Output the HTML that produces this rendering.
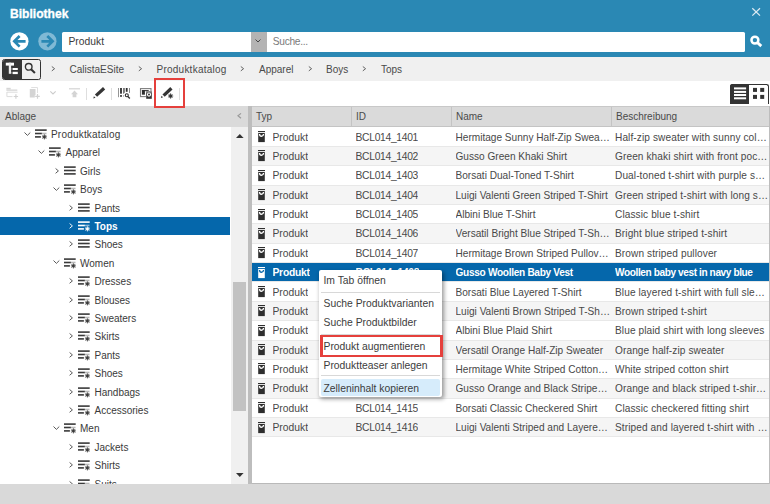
<!DOCTYPE html>
<html><head><meta charset="utf-8"><style>
*{margin:0;padding:0;box-sizing:border-box}
html,body{width:770px;height:504px;overflow:hidden}
body{position:relative;background:#d9d9d9;font-family:"Liberation Sans",sans-serif;font-size:10px;color:#484848}
.a{position:absolute}
.ic{position:absolute;overflow:visible}
.tt{position:absolute;height:18.4px;line-height:19.4px;font-size:10px;white-space:nowrap}
.row{position:absolute;left:252px;width:517px;height:19.37px;line-height:19.6px;border-bottom:1px solid #e8e8e8;white-space:nowrap;font-size:10px}
.row span{position:absolute;top:0;overflow:hidden}
.pi{position:absolute;left:6px;top:3.5px}
.c1{left:20.5px;font-size:10.3px}
.c2{left:103.5px;font-size:10.3px;letter-spacing:-0.3px}
.c3{left:203.5px;width:158px;font-size:10.1px}
.c4{left:363px;width:154px;font-size:10.1px;letter-spacing:0.1px}
.sel .c1{letter-spacing:-0.25px}
.sel .c3{letter-spacing:-0.3px}
.sel .c4{letter-spacing:-0.4px}
.mi{position:absolute;left:323.5px;height:18px;line-height:18px;font-size:10.35px;color:#3c3c3c;white-space:nowrap}
.hd{position:absolute;top:106px;height:21px;background:#dadada;border-bottom:1px solid #c4c4c4;line-height:22px;font-size:10px;color:#4a4a4a}
</style></head><body>
<!-- title bar -->
<div class="a" style="left:0;top:0;width:770px;height:57px;background:#2a88b4"></div>
<div class="a" style="left:10px;top:6px;font-size:12.1px;font-weight:bold;color:#fff;-webkit-text-stroke:0.3px #fff;line-height:16px">Bibliothek</div>
<svg class="ic" style="left:752px;top:8.3px" width="9" height="8" viewBox="0 0 9 8"><path d="M0.3 0.3 L8 7.6 M8 0.3 L0.3 7.6" stroke="#dceaf2" stroke-width="1.25"/></svg>
<!-- nav -->
<svg class="ic" style="left:10px;top:32.2px" width="19" height="19" viewBox="0 0 19 19"><circle cx="9.4" cy="9.3" r="9.1" fill="#fff"/><path d="M4.3 9.3 H15.6 M9.6 4 L4.3 9.3 L9.6 14.6" fill="none" stroke="#2a88b4" stroke-width="2.7"/></svg>
<svg class="ic" style="left:37.5px;top:32.2px" width="19" height="19" viewBox="0 0 19 19"><circle cx="9.4" cy="9.3" r="9.1" fill="#80b9d5"/><path d="M3.4 9.3 H14.6 M9.3 4 L14.6 9.3 L9.3 14.6" fill="none" stroke="#2a88b4" stroke-width="2.7"/></svg>
<div class="a" style="left:61.5px;top:32.2px;width:190px;height:20px;background:#fff;border-radius:1.5px 0 0 1.5px;line-height:20.6px;padding-left:7px;font-size:10.3px;color:#3a3a3a">Produkt</div>
<div class="a" style="left:251.2px;top:32.2px;width:15.6px;height:20px;background:#b4b3b3"></div>
<svg class="ic" style="left:254.9px;top:38.6px" width="7" height="5" viewBox="0 0 7 5"><path d="M0.5 0.5 L3 3 L5.5 0.5" fill="none" stroke="#454545" stroke-width="1"/></svg>
<div class="a" style="left:266.8px;top:32.2px;width:478.7px;height:20px;background:#fff;border-radius:0 1.5px 1.5px 0;line-height:20.8px;padding-left:6px;font-size:10.2px;letter-spacing:-0.3px;color:#7a7a7a">Suche...</div>
<svg class="ic" style="left:749.5px;top:35px" width="13" height="13" viewBox="0 0 13 13"><circle cx="4.9" cy="5.1" r="3.45" fill="none" stroke="#fff" stroke-width="2.5"/><path d="M7.2 7.4 L11.3 11.1" stroke="#fff" stroke-width="2.8"/></svg>
<!-- breadcrumb -->
<div class="a" style="left:0;top:57px;width:770px;height:24px;background:#f0f0f0"></div>
<div class="a" style="left:2px;top:59.2px;width:39px;height:20.8px;border:1px solid #333;border-radius:2.5px;background:#f0f0f0;overflow:hidden"><div class="a" style="left:0;top:0;width:18.8px;height:19px;background:#363636"></div></div>
<svg class="ic" style="left:5px;top:62px" width="14" height="13" viewBox="0 0 14 13"><rect x="0.8" y="0.7" width="8.2" height="2.9" fill="#fff"/><rect x="3.8" y="0.7" width="2.3" height="11.1" fill="#eee"/><rect x="7.6" y="6" width="5.2" height="2" fill="#fff"/><rect x="7.6" y="9.8" width="5.2" height="2.3" fill="#fff"/><rect x="6.1" y="6.6" width="1.5" height="0.8" fill="#aaa"/><rect x="6.1" y="10.5" width="1.5" height="0.8" fill="#aaa"/></svg>
<svg class="ic" style="left:24px;top:62px" width="13" height="13" viewBox="0 0 13 13"><circle cx="4.7" cy="4.8" r="3.3" fill="none" stroke="#333" stroke-width="1.4"/><path d="M7.1 7.2 L10.9 11" stroke="#333" stroke-width="2"/></svg>
<svg class="ic" style="left:51px;top:65.8px" width="5" height="6" viewBox="0 0 5 6"><path d="M0.8 0.5 L3.6 2.7 L0.8 4.9" fill="none" stroke="#555" stroke-width="0.9"/></svg>
<div class="a" style="left:69.5px;top:62.2px;line-height:16px;font-size:10px;color:#4a4a4a;white-space:nowrap">CalistaESite</div>
<svg class="ic" style="left:138px;top:65.8px" width="5" height="6" viewBox="0 0 5 6"><path d="M0.8 0.5 L3.6 2.7 L0.8 4.9" fill="none" stroke="#555" stroke-width="0.9"/></svg>
<div class="a" style="left:156.5px;top:62.2px;line-height:16px;font-size:10px;color:#4a4a4a;white-space:nowrap"><span style="letter-spacing:0.24px">Produktkatalog</span></div>
<svg class="ic" style="left:240px;top:65.8px" width="5" height="6" viewBox="0 0 5 6"><path d="M0.8 0.5 L3.6 2.7 L0.8 4.9" fill="none" stroke="#555" stroke-width="0.9"/></svg>
<div class="a" style="left:259px;top:62.2px;line-height:16px;font-size:10px;color:#4a4a4a;white-space:nowrap">Apparel</div>
<svg class="ic" style="left:308px;top:65.8px" width="5" height="6" viewBox="0 0 5 6"><path d="M0.8 0.5 L3.6 2.7 L0.8 4.9" fill="none" stroke="#555" stroke-width="0.9"/></svg>
<div class="a" style="left:326px;top:62.2px;line-height:16px;font-size:10px;color:#4a4a4a;white-space:nowrap">Boys</div>
<svg class="ic" style="left:362px;top:65.8px" width="5" height="6" viewBox="0 0 5 6"><path d="M0.8 0.5 L3.6 2.7 L0.8 4.9" fill="none" stroke="#555" stroke-width="0.9"/></svg>
<div class="a" style="left:381px;top:62.2px;line-height:16px;font-size:10px;color:#4a4a4a;white-space:nowrap">Tops</div>
<!-- toolbar -->
<div class="a" style="left:0;top:81px;width:770px;height:25px;background:#fff"></div>

<svg class="ic" style="left:6px;top:87px" width="14" height="13" viewBox="0 0 14 13"><rect x="0.4" y="0.8" width="4.3" height="1.7" fill="#d6d6d6"/><rect x="0.4" y="2.5" width="10.9" height="1.3" fill="#d6d6d6"/><path d="M0.9 5.2 H11.6 M0.9 5 V9.6 H6.5" fill="none" stroke="#dcdcdc" stroke-width="1"/><path d="M9.9 7.3 V11.7 M7.7 9.5 H12.1" stroke="#d2d2d2" stroke-width="1.2"/></svg>
<svg class="ic" style="left:29px;top:87px" width="12" height="13" viewBox="0 0 12 13"><path d="M2.2 0.5 H8.5 V6" fill="none" stroke="#e0e0e0" stroke-width="1"/><path d="M0.8 1.9 H6.5 V8 H5.8 V10.6 H0.8 Z" fill="#d4d4d4"/><path d="M8.5 7.1 V11.7 M6.2 9.4 H10.8" stroke="#d2d2d2" stroke-width="1.2"/></svg>
<svg class="ic" style="left:50px;top:91px" width="8" height="5" viewBox="0 0 8 5"><path d="M0.3 0.3 L3 3 L5.7 0.3" fill="none" stroke="#cccccc" stroke-width="1.1"/></svg>
<svg class="ic" style="left:69px;top:87.5px" width="11" height="10" viewBox="0 0 11 10"><rect x="0" y="0.2" width="11" height="1.2" fill="#d4d4d4"/><path d="M5.5 2.4 L9 6.3 H7.4 V9.2 H3.6 V6.3 H2 Z" fill="#d4d4d4"/></svg>
<div class="a" style="left:86px;top:88px;width:1px;height:12px;background:#dedede"></div>
<svg class="ic" style="left:92.5px;top:87px" width="13" height="12" viewBox="0 0 13 12"><path d="M3.0 8.65 L11.1 1.3" stroke="#353535" stroke-width="3.3"/><path d="M0.3 11.4 L0.9 9.2 L2.5 10.8 Z" fill="#353535"/></svg>
<div class="a" style="left:111px;top:88px;width:1px;height:12px;background:#dedede"></div>
<svg class="ic" style="left:118px;top:87.9px" width="13" height="12" viewBox="0 0 13 12"><rect x="0.1" y="0" width="0.9" height="9.2" fill="#8a8a8a"/><rect x="2.1" y="0" width="1.8" height="5.7" fill="#2e2e2e"/><rect x="2.1" y="7.1" width="1.8" height="1.7" fill="#2e2e2e"/><path d="M5 0 H6.9 V4.4 L5.6 5.7 H5 Z" fill="#7a7a7a"/><rect x="5" y="7.1" width="1" height="1.7" fill="#b0b0b0"/><rect x="7.8" y="0" width="1.8" height="3.8" fill="#2e2e2e"/><rect x="11" y="0" width="1" height="4.9" fill="#8a8a8a"/><circle cx="8.8" cy="7.3" r="1.5" fill="none" stroke="#2e2e2e" stroke-width="1.1"/><path d="M9.9 8.5 L11.8 10.4" stroke="#2e2e2e" stroke-width="1.4"/></svg>
<svg class="ic" style="left:139px;top:87px" width="14" height="13" viewBox="0 0 14 13"><rect x="1.5" y="1.6" width="10.5" height="8" fill="none" stroke="#7e7e7e" stroke-width="1.1"/><rect x="2.9" y="3.1" width="3" height="4.6" fill="#2e2e2e"/><rect x="2.9" y="3.1" width="6.8" height="1.1" fill="#2e2e2e"/><rect x="6.9" y="4" width="6.2" height="8.2" fill="#fff"/><rect x="7.2" y="4.3" width="5.6" height="7.5" fill="#333"/><rect x="7.2" y="4.3" width="5.6" height="1.3" fill="#9a9a9a"/><circle cx="10" cy="7.6" r="1.55" fill="#333" stroke="#fff" stroke-width="1.1"/></svg>
<svg class="ic" style="left:161px;top:87px" width="14" height="13" viewBox="0 0 14 13"><path d="M2.6 8.65 L10.4 1.3" stroke="#353535" stroke-width="3.3"/><path d="M-0.1 10.9 L0.5 8.7 L2.1 10.3 Z" fill="#353535"/><g stroke="#353535" stroke-width="0.9"><line x1="9.6" y1="6.4" x2="9.6" y2="11.6"/><line x1="7" y1="9" x2="12.2" y2="9"/><line x1="7.8" y1="7.2" x2="11.4" y2="10.8"/><line x1="11.4" y1="7.2" x2="7.8" y2="10.8"/></g><circle cx="9.6" cy="9" r="1.5" fill="#353535"/></svg>
<div class="a" style="left:179px;top:88px;width:1px;height:12px;background:#dedede"></div>
<div class="a" style="left:730px;top:84px;width:39px;height:20px;border:1.1px solid #333;border-bottom:none;border-radius:2.5px 2.5px 0 0;background:#fff"></div>
<div class="a" style="left:730px;top:84px;width:19px;height:20px;background:#333;border-radius:2.5px 0 0 0"></div>
<svg class="ic" style="left:734px;top:87px" width="13" height="13" viewBox="0 0 13 13"><rect x="0" y="0.4" width="12.1" height="2" fill="#fff"/><rect x="0" y="3.9" width="12.1" height="2" fill="#fff"/><rect x="0" y="7" width="12.1" height="2" fill="#fff"/><rect x="0" y="10.3" width="12.1" height="2" fill="#fff"/></svg>
<svg class="ic" style="left:752px;top:87px" width="13" height="13" viewBox="0 0 13 13"><rect x="1" y="0.9" width="4" height="4" fill="#333"/><rect x="8.2" y="0.9" width="4" height="4" fill="#333"/><rect x="1" y="7.9" width="4" height="4" fill="#333"/><rect x="8.2" y="7.9" width="4" height="4" fill="#333"/></svg>

<!-- left panel -->
<div class="hd" style="left:0;width:248px;padding-left:5px;border-bottom:none">Ablage</div>
<svg class="ic" style="left:237px;top:112.8px" width="5" height="6" viewBox="0 0 5 6"><path d="M4 0.4 L1 2.8 L4 5.2" fill="none" stroke="#999" stroke-width="1.2"/></svg>
<div class="a" style="left:0;top:127px;width:231px;height:357px;background:#fff;overflow:hidden">
</div>
<div class="a" style="left:0;top:127px;width:231px;height:357px;overflow:hidden">
<svg class="ic" style="left:23.8px;top:4.6px" width="7" height="4" viewBox="0 0 7 4"><path d="M0.5 0.5 L3.4 3.4 L6.3 0.5" fill="none" stroke="#505050" stroke-width="0.95"/></svg>
<svg class="ic" style="left:34.6px;top:1.0px" width="13" height="13" viewBox="0 0 13 13"><rect x="0" y="1.3" width="11.7" height="1.6" fill="#3a3a3a"/><rect x="0" y="4.7" width="6.9" height="1.6" fill="#3a3a3a"/><rect x="6.9" y="4.7" width="4.6" height="1.6" fill="#b8b8b8"/><rect x="0" y="8.1" width="5.9" height="1.6" fill="#3a3a3a"/><g stroke="#3a3a3a" stroke-width="0.9"><line x1="9.4" y1="6.4" x2="9.4" y2="11.4"/><line x1="6.9" y1="8.9" x2="11.9" y2="8.9"/><line x1="7.6" y1="7.1" x2="11.2" y2="10.7"/><line x1="11.2" y1="7.1" x2="7.6" y2="10.7"/></g><circle cx="9.4" cy="8.9" r="1.2" fill="#3a3a3a"/></svg>
<div class="tt" style="left:51.0px;top:-2.0px;color:#3a3a3a;font-weight:normal"><span style="letter-spacing:0.2px">Produktkatalog</span></div>
<svg class="ic" style="left:38.3px;top:23.0px" width="7" height="4" viewBox="0 0 7 4"><path d="M0.5 0.5 L3.4 3.4 L6.3 0.5" fill="none" stroke="#505050" stroke-width="0.95"/></svg>
<svg class="ic" style="left:49.1px;top:19.4px" width="13" height="13" viewBox="0 0 13 13"><rect x="0" y="1.3" width="11.7" height="1.6" fill="#3a3a3a"/><rect x="0" y="4.7" width="6.9" height="1.6" fill="#3a3a3a"/><rect x="6.9" y="4.7" width="4.6" height="1.6" fill="#b8b8b8"/><rect x="0" y="8.1" width="5.9" height="1.6" fill="#3a3a3a"/><g stroke="#3a3a3a" stroke-width="0.9"><line x1="9.4" y1="6.4" x2="9.4" y2="11.4"/><line x1="6.9" y1="8.9" x2="11.9" y2="8.9"/><line x1="7.6" y1="7.1" x2="11.2" y2="10.7"/><line x1="11.2" y1="7.1" x2="7.6" y2="10.7"/></g><circle cx="9.4" cy="8.9" r="1.2" fill="#3a3a3a"/></svg>
<div class="tt" style="left:65.5px;top:16.4px;color:#3a3a3a;font-weight:normal">Apparel</div>
<svg class="ic" style="left:54.8px;top:40.699999999999996px" width="5" height="6" viewBox="0 0 5 6"><path d="M0.6 0.5 L3.4 2.9 L0.6 5.3" fill="none" stroke="#505050" stroke-width="0.95"/></svg>
<svg class="ic" style="left:63.6px;top:37.8px" width="13" height="11" viewBox="0 0 13 11"><rect x="0" y="1.3" width="11.7" height="1.6" fill="#3a3a3a"/><rect x="0" y="4.7" width="11.7" height="1.6" fill="#3a3a3a"/><rect x="0" y="8.1" width="11.7" height="1.6" fill="#3a3a3a"/></svg>
<div class="tt" style="left:80.0px;top:34.8px;color:#3a3a3a;font-weight:normal">Girls</div>
<svg class="ic" style="left:52.8px;top:59.8px" width="7" height="4" viewBox="0 0 7 4"><path d="M0.5 0.5 L3.4 3.4 L6.3 0.5" fill="none" stroke="#505050" stroke-width="0.95"/></svg>
<svg class="ic" style="left:63.6px;top:56.199999999999996px" width="13" height="13" viewBox="0 0 13 13"><rect x="0" y="1.3" width="11.7" height="1.6" fill="#3a3a3a"/><rect x="0" y="4.7" width="6.9" height="1.6" fill="#3a3a3a"/><rect x="6.9" y="4.7" width="4.6" height="1.6" fill="#b8b8b8"/><rect x="0" y="8.1" width="5.9" height="1.6" fill="#3a3a3a"/><g stroke="#3a3a3a" stroke-width="0.9"><line x1="9.4" y1="6.4" x2="9.4" y2="11.4"/><line x1="6.9" y1="8.9" x2="11.9" y2="8.9"/><line x1="7.6" y1="7.1" x2="11.2" y2="10.7"/><line x1="11.2" y1="7.1" x2="7.6" y2="10.7"/></g><circle cx="9.4" cy="8.9" r="1.2" fill="#3a3a3a"/></svg>
<div class="tt" style="left:80.0px;top:53.2px;color:#3a3a3a;font-weight:normal">Boys</div>
<svg class="ic" style="left:69.3px;top:77.5px" width="5" height="6" viewBox="0 0 5 6"><path d="M0.6 0.5 L3.4 2.9 L0.6 5.3" fill="none" stroke="#505050" stroke-width="0.95"/></svg>
<svg class="ic" style="left:78.1px;top:74.6px" width="13" height="11" viewBox="0 0 13 11"><rect x="0" y="1.3" width="11.7" height="1.6" fill="#3a3a3a"/><rect x="0" y="4.7" width="11.7" height="1.6" fill="#3a3a3a"/><rect x="0" y="8.1" width="11.7" height="1.6" fill="#3a3a3a"/></svg>
<div class="tt" style="left:94.5px;top:71.6px;color:#3a3a3a;font-weight:normal">Pants</div>
<div style="position:absolute;left:0;top:90.0px;width:230px;height:18.4px;background:#0567ab"></div>
<svg class="ic" style="left:69.3px;top:95.9px" width="5" height="6" viewBox="0 0 5 6"><path d="M0.6 0.5 L3.4 2.9 L0.6 5.3" fill="none" stroke="#ffffff" stroke-width="0.95"/></svg>
<svg class="ic" style="left:78.1px;top:93.0px" width="13" height="13" viewBox="0 0 13 13"><rect x="0" y="1.3" width="11.7" height="1.6" fill="#ffffff"/><rect x="0" y="4.7" width="6.9" height="1.6" fill="#ffffff"/><rect x="6.9" y="4.7" width="4.6" height="1.6" fill="#8fb8d8"/><rect x="0" y="8.1" width="5.9" height="1.6" fill="#ffffff"/><g stroke="#ffffff" stroke-width="0.9"><line x1="9.4" y1="6.4" x2="9.4" y2="11.4"/><line x1="6.9" y1="8.9" x2="11.9" y2="8.9"/><line x1="7.6" y1="7.1" x2="11.2" y2="10.7"/><line x1="11.2" y1="7.1" x2="7.6" y2="10.7"/></g><circle cx="9.4" cy="8.9" r="1.2" fill="#ffffff"/></svg>
<div class="tt" style="left:94.5px;top:90.0px;color:#ffffff;font-weight:bold">Tops</div>
<svg class="ic" style="left:69.3px;top:114.3px" width="5" height="6" viewBox="0 0 5 6"><path d="M0.6 0.5 L3.4 2.9 L0.6 5.3" fill="none" stroke="#505050" stroke-width="0.95"/></svg>
<svg class="ic" style="left:78.1px;top:111.39999999999999px" width="13" height="11" viewBox="0 0 13 11"><rect x="0" y="1.3" width="11.7" height="1.6" fill="#3a3a3a"/><rect x="0" y="4.7" width="11.7" height="1.6" fill="#3a3a3a"/><rect x="0" y="8.1" width="11.7" height="1.6" fill="#3a3a3a"/></svg>
<div class="tt" style="left:94.5px;top:108.4px;color:#3a3a3a;font-weight:normal">Shoes</div>
<svg class="ic" style="left:52.8px;top:133.39999999999998px" width="7" height="4" viewBox="0 0 7 4"><path d="M0.5 0.5 L3.4 3.4 L6.3 0.5" fill="none" stroke="#505050" stroke-width="0.95"/></svg>
<svg class="ic" style="left:63.6px;top:129.79999999999998px" width="13" height="13" viewBox="0 0 13 13"><rect x="0" y="1.3" width="11.7" height="1.6" fill="#3a3a3a"/><rect x="0" y="4.7" width="6.9" height="1.6" fill="#3a3a3a"/><rect x="6.9" y="4.7" width="4.6" height="1.6" fill="#b8b8b8"/><rect x="0" y="8.1" width="5.9" height="1.6" fill="#3a3a3a"/><g stroke="#3a3a3a" stroke-width="0.9"><line x1="9.4" y1="6.4" x2="9.4" y2="11.4"/><line x1="6.9" y1="8.9" x2="11.9" y2="8.9"/><line x1="7.6" y1="7.1" x2="11.2" y2="10.7"/><line x1="11.2" y1="7.1" x2="7.6" y2="10.7"/></g><circle cx="9.4" cy="8.9" r="1.2" fill="#3a3a3a"/></svg>
<div class="tt" style="left:80.0px;top:126.8px;color:#3a3a3a;font-weight:normal">Women</div>
<svg class="ic" style="left:69.3px;top:151.1px" width="5" height="6" viewBox="0 0 5 6"><path d="M0.6 0.5 L3.4 2.9 L0.6 5.3" fill="none" stroke="#505050" stroke-width="0.95"/></svg>
<svg class="ic" style="left:78.1px;top:148.2px" width="13" height="13" viewBox="0 0 13 13"><rect x="0" y="1.3" width="11.7" height="1.6" fill="#3a3a3a"/><rect x="0" y="4.7" width="6.9" height="1.6" fill="#3a3a3a"/><rect x="6.9" y="4.7" width="4.6" height="1.6" fill="#b8b8b8"/><rect x="0" y="8.1" width="5.9" height="1.6" fill="#3a3a3a"/><g stroke="#3a3a3a" stroke-width="0.9"><line x1="9.4" y1="6.4" x2="9.4" y2="11.4"/><line x1="6.9" y1="8.9" x2="11.9" y2="8.9"/><line x1="7.6" y1="7.1" x2="11.2" y2="10.7"/><line x1="11.2" y1="7.1" x2="7.6" y2="10.7"/></g><circle cx="9.4" cy="8.9" r="1.2" fill="#3a3a3a"/></svg>
<div class="tt" style="left:94.5px;top:145.2px;color:#3a3a3a;font-weight:normal">Dresses</div>
<svg class="ic" style="left:69.3px;top:169.5px" width="5" height="6" viewBox="0 0 5 6"><path d="M0.6 0.5 L3.4 2.9 L0.6 5.3" fill="none" stroke="#505050" stroke-width="0.95"/></svg>
<svg class="ic" style="left:78.1px;top:166.6px" width="13" height="13" viewBox="0 0 13 13"><rect x="0" y="1.3" width="11.7" height="1.6" fill="#3a3a3a"/><rect x="0" y="4.7" width="6.9" height="1.6" fill="#3a3a3a"/><rect x="6.9" y="4.7" width="4.6" height="1.6" fill="#b8b8b8"/><rect x="0" y="8.1" width="5.9" height="1.6" fill="#3a3a3a"/><g stroke="#3a3a3a" stroke-width="0.9"><line x1="9.4" y1="6.4" x2="9.4" y2="11.4"/><line x1="6.9" y1="8.9" x2="11.9" y2="8.9"/><line x1="7.6" y1="7.1" x2="11.2" y2="10.7"/><line x1="11.2" y1="7.1" x2="7.6" y2="10.7"/></g><circle cx="9.4" cy="8.9" r="1.2" fill="#3a3a3a"/></svg>
<div class="tt" style="left:94.5px;top:163.6px;color:#3a3a3a;font-weight:normal">Blouses</div>
<svg class="ic" style="left:69.3px;top:187.9px" width="5" height="6" viewBox="0 0 5 6"><path d="M0.6 0.5 L3.4 2.9 L0.6 5.3" fill="none" stroke="#505050" stroke-width="0.95"/></svg>
<svg class="ic" style="left:78.1px;top:185.0px" width="13" height="13" viewBox="0 0 13 13"><rect x="0" y="1.3" width="11.7" height="1.6" fill="#3a3a3a"/><rect x="0" y="4.7" width="6.9" height="1.6" fill="#3a3a3a"/><rect x="6.9" y="4.7" width="4.6" height="1.6" fill="#b8b8b8"/><rect x="0" y="8.1" width="5.9" height="1.6" fill="#3a3a3a"/><g stroke="#3a3a3a" stroke-width="0.9"><line x1="9.4" y1="6.4" x2="9.4" y2="11.4"/><line x1="6.9" y1="8.9" x2="11.9" y2="8.9"/><line x1="7.6" y1="7.1" x2="11.2" y2="10.7"/><line x1="11.2" y1="7.1" x2="7.6" y2="10.7"/></g><circle cx="9.4" cy="8.9" r="1.2" fill="#3a3a3a"/></svg>
<div class="tt" style="left:94.5px;top:182.0px;color:#3a3a3a;font-weight:normal">Sweaters</div>
<svg class="ic" style="left:69.3px;top:206.29999999999998px" width="5" height="6" viewBox="0 0 5 6"><path d="M0.6 0.5 L3.4 2.9 L0.6 5.3" fill="none" stroke="#505050" stroke-width="0.95"/></svg>
<svg class="ic" style="left:78.1px;top:203.39999999999998px" width="13" height="13" viewBox="0 0 13 13"><rect x="0" y="1.3" width="11.7" height="1.6" fill="#3a3a3a"/><rect x="0" y="4.7" width="6.9" height="1.6" fill="#3a3a3a"/><rect x="6.9" y="4.7" width="4.6" height="1.6" fill="#b8b8b8"/><rect x="0" y="8.1" width="5.9" height="1.6" fill="#3a3a3a"/><g stroke="#3a3a3a" stroke-width="0.9"><line x1="9.4" y1="6.4" x2="9.4" y2="11.4"/><line x1="6.9" y1="8.9" x2="11.9" y2="8.9"/><line x1="7.6" y1="7.1" x2="11.2" y2="10.7"/><line x1="11.2" y1="7.1" x2="7.6" y2="10.7"/></g><circle cx="9.4" cy="8.9" r="1.2" fill="#3a3a3a"/></svg>
<div class="tt" style="left:94.5px;top:200.4px;color:#3a3a3a;font-weight:normal">Skirts</div>
<svg class="ic" style="left:69.3px;top:224.7px" width="5" height="6" viewBox="0 0 5 6"><path d="M0.6 0.5 L3.4 2.9 L0.6 5.3" fill="none" stroke="#505050" stroke-width="0.95"/></svg>
<svg class="ic" style="left:78.1px;top:221.79999999999998px" width="13" height="13" viewBox="0 0 13 13"><rect x="0" y="1.3" width="11.7" height="1.6" fill="#3a3a3a"/><rect x="0" y="4.7" width="6.9" height="1.6" fill="#3a3a3a"/><rect x="6.9" y="4.7" width="4.6" height="1.6" fill="#b8b8b8"/><rect x="0" y="8.1" width="5.9" height="1.6" fill="#3a3a3a"/><g stroke="#3a3a3a" stroke-width="0.9"><line x1="9.4" y1="6.4" x2="9.4" y2="11.4"/><line x1="6.9" y1="8.9" x2="11.9" y2="8.9"/><line x1="7.6" y1="7.1" x2="11.2" y2="10.7"/><line x1="11.2" y1="7.1" x2="7.6" y2="10.7"/></g><circle cx="9.4" cy="8.9" r="1.2" fill="#3a3a3a"/></svg>
<div class="tt" style="left:94.5px;top:218.8px;color:#3a3a3a;font-weight:normal">Pants</div>
<svg class="ic" style="left:69.3px;top:243.1px" width="5" height="6" viewBox="0 0 5 6"><path d="M0.6 0.5 L3.4 2.9 L0.6 5.3" fill="none" stroke="#505050" stroke-width="0.95"/></svg>
<svg class="ic" style="left:78.1px;top:240.2px" width="13" height="13" viewBox="0 0 13 13"><rect x="0" y="1.3" width="11.7" height="1.6" fill="#3a3a3a"/><rect x="0" y="4.7" width="6.9" height="1.6" fill="#3a3a3a"/><rect x="6.9" y="4.7" width="4.6" height="1.6" fill="#b8b8b8"/><rect x="0" y="8.1" width="5.9" height="1.6" fill="#3a3a3a"/><g stroke="#3a3a3a" stroke-width="0.9"><line x1="9.4" y1="6.4" x2="9.4" y2="11.4"/><line x1="6.9" y1="8.9" x2="11.9" y2="8.9"/><line x1="7.6" y1="7.1" x2="11.2" y2="10.7"/><line x1="11.2" y1="7.1" x2="7.6" y2="10.7"/></g><circle cx="9.4" cy="8.9" r="1.2" fill="#3a3a3a"/></svg>
<div class="tt" style="left:94.5px;top:237.2px;color:#3a3a3a;font-weight:normal">Shoes</div>
<svg class="ic" style="left:69.3px;top:261.49999999999994px" width="5" height="6" viewBox="0 0 5 6"><path d="M0.6 0.5 L3.4 2.9 L0.6 5.3" fill="none" stroke="#505050" stroke-width="0.95"/></svg>
<svg class="ic" style="left:78.1px;top:258.59999999999997px" width="13" height="13" viewBox="0 0 13 13"><rect x="0" y="1.3" width="11.7" height="1.6" fill="#3a3a3a"/><rect x="0" y="4.7" width="6.9" height="1.6" fill="#3a3a3a"/><rect x="6.9" y="4.7" width="4.6" height="1.6" fill="#b8b8b8"/><rect x="0" y="8.1" width="5.9" height="1.6" fill="#3a3a3a"/><g stroke="#3a3a3a" stroke-width="0.9"><line x1="9.4" y1="6.4" x2="9.4" y2="11.4"/><line x1="6.9" y1="8.9" x2="11.9" y2="8.9"/><line x1="7.6" y1="7.1" x2="11.2" y2="10.7"/><line x1="11.2" y1="7.1" x2="7.6" y2="10.7"/></g><circle cx="9.4" cy="8.9" r="1.2" fill="#3a3a3a"/></svg>
<div class="tt" style="left:94.5px;top:255.6px;color:#3a3a3a;font-weight:normal">Handbags</div>
<svg class="ic" style="left:69.3px;top:279.9px" width="5" height="6" viewBox="0 0 5 6"><path d="M0.6 0.5 L3.4 2.9 L0.6 5.3" fill="none" stroke="#505050" stroke-width="0.95"/></svg>
<svg class="ic" style="left:78.1px;top:277.0px" width="13" height="13" viewBox="0 0 13 13"><rect x="0" y="1.3" width="11.7" height="1.6" fill="#3a3a3a"/><rect x="0" y="4.7" width="6.9" height="1.6" fill="#3a3a3a"/><rect x="6.9" y="4.7" width="4.6" height="1.6" fill="#b8b8b8"/><rect x="0" y="8.1" width="5.9" height="1.6" fill="#3a3a3a"/><g stroke="#3a3a3a" stroke-width="0.9"><line x1="9.4" y1="6.4" x2="9.4" y2="11.4"/><line x1="6.9" y1="8.9" x2="11.9" y2="8.9"/><line x1="7.6" y1="7.1" x2="11.2" y2="10.7"/><line x1="11.2" y1="7.1" x2="7.6" y2="10.7"/></g><circle cx="9.4" cy="8.9" r="1.2" fill="#3a3a3a"/></svg>
<div class="tt" style="left:94.5px;top:274.0px;color:#3a3a3a;font-weight:normal">Accessories</div>
<svg class="ic" style="left:52.8px;top:299.0px" width="7" height="4" viewBox="0 0 7 4"><path d="M0.5 0.5 L3.4 3.4 L6.3 0.5" fill="none" stroke="#505050" stroke-width="0.95"/></svg>
<svg class="ic" style="left:63.6px;top:295.4px" width="13" height="13" viewBox="0 0 13 13"><rect x="0" y="1.3" width="11.7" height="1.6" fill="#3a3a3a"/><rect x="0" y="4.7" width="6.9" height="1.6" fill="#3a3a3a"/><rect x="6.9" y="4.7" width="4.6" height="1.6" fill="#b8b8b8"/><rect x="0" y="8.1" width="5.9" height="1.6" fill="#3a3a3a"/><g stroke="#3a3a3a" stroke-width="0.9"><line x1="9.4" y1="6.4" x2="9.4" y2="11.4"/><line x1="6.9" y1="8.9" x2="11.9" y2="8.9"/><line x1="7.6" y1="7.1" x2="11.2" y2="10.7"/><line x1="11.2" y1="7.1" x2="7.6" y2="10.7"/></g><circle cx="9.4" cy="8.9" r="1.2" fill="#3a3a3a"/></svg>
<div class="tt" style="left:80.0px;top:292.4px;color:#3a3a3a;font-weight:normal">Men</div>
<svg class="ic" style="left:69.3px;top:316.69999999999993px" width="5" height="6" viewBox="0 0 5 6"><path d="M0.6 0.5 L3.4 2.9 L0.6 5.3" fill="none" stroke="#505050" stroke-width="0.95"/></svg>
<svg class="ic" style="left:78.1px;top:313.79999999999995px" width="13" height="13" viewBox="0 0 13 13"><rect x="0" y="1.3" width="11.7" height="1.6" fill="#3a3a3a"/><rect x="0" y="4.7" width="6.9" height="1.6" fill="#3a3a3a"/><rect x="6.9" y="4.7" width="4.6" height="1.6" fill="#b8b8b8"/><rect x="0" y="8.1" width="5.9" height="1.6" fill="#3a3a3a"/><g stroke="#3a3a3a" stroke-width="0.9"><line x1="9.4" y1="6.4" x2="9.4" y2="11.4"/><line x1="6.9" y1="8.9" x2="11.9" y2="8.9"/><line x1="7.6" y1="7.1" x2="11.2" y2="10.7"/><line x1="11.2" y1="7.1" x2="7.6" y2="10.7"/></g><circle cx="9.4" cy="8.9" r="1.2" fill="#3a3a3a"/></svg>
<div class="tt" style="left:94.5px;top:310.8px;color:#3a3a3a;font-weight:normal">Jackets</div>
<svg class="ic" style="left:69.3px;top:335.09999999999997px" width="5" height="6" viewBox="0 0 5 6"><path d="M0.6 0.5 L3.4 2.9 L0.6 5.3" fill="none" stroke="#505050" stroke-width="0.95"/></svg>
<svg class="ic" style="left:78.1px;top:332.2px" width="13" height="13" viewBox="0 0 13 13"><rect x="0" y="1.3" width="11.7" height="1.6" fill="#3a3a3a"/><rect x="0" y="4.7" width="6.9" height="1.6" fill="#3a3a3a"/><rect x="6.9" y="4.7" width="4.6" height="1.6" fill="#b8b8b8"/><rect x="0" y="8.1" width="5.9" height="1.6" fill="#3a3a3a"/><g stroke="#3a3a3a" stroke-width="0.9"><line x1="9.4" y1="6.4" x2="9.4" y2="11.4"/><line x1="6.9" y1="8.9" x2="11.9" y2="8.9"/><line x1="7.6" y1="7.1" x2="11.2" y2="10.7"/><line x1="11.2" y1="7.1" x2="7.6" y2="10.7"/></g><circle cx="9.4" cy="8.9" r="1.2" fill="#3a3a3a"/></svg>
<div class="tt" style="left:94.5px;top:329.2px;color:#3a3a3a;font-weight:normal">Shirts</div>
<svg class="ic" style="left:69.3px;top:353.49999999999994px" width="5" height="6" viewBox="0 0 5 6"><path d="M0.6 0.5 L3.4 2.9 L0.6 5.3" fill="none" stroke="#505050" stroke-width="0.95"/></svg>
<svg class="ic" style="left:78.1px;top:350.59999999999997px" width="13" height="13" viewBox="0 0 13 13"><rect x="0" y="1.3" width="11.7" height="1.6" fill="#3a3a3a"/><rect x="0" y="4.7" width="6.9" height="1.6" fill="#3a3a3a"/><rect x="6.9" y="4.7" width="4.6" height="1.6" fill="#b8b8b8"/><rect x="0" y="8.1" width="5.9" height="1.6" fill="#3a3a3a"/><g stroke="#3a3a3a" stroke-width="0.9"><line x1="9.4" y1="6.4" x2="9.4" y2="11.4"/><line x1="6.9" y1="8.9" x2="11.9" y2="8.9"/><line x1="7.6" y1="7.1" x2="11.2" y2="10.7"/><line x1="11.2" y1="7.1" x2="7.6" y2="10.7"/></g><circle cx="9.4" cy="8.9" r="1.2" fill="#3a3a3a"/></svg>
<div class="tt" style="left:94.5px;top:347.6px;color:#3a3a3a;font-weight:normal">Suits</div>
</div>
<div class="a" style="left:231px;top:127px;width:17px;height:357px;background:#f0f0f0"></div>
<div class="a" style="left:232.7px;top:282px;width:13.3px;height:129px;background:#c2c2c2"></div>
<svg class="ic" style="left:235.7px;top:133.7px" width="8" height="5" viewBox="0 0 8 5"><path d="M0 4 L3.8 0 L7.6 4 Z" fill="#333"/></svg>
<svg class="ic" style="left:235.7px;top:472.8px" width="8" height="5" viewBox="0 0 8 5"><path d="M0 0 L3.8 4 L7.6 0 Z" fill="#333"/></svg>
<div class="a" style="left:248px;top:106px;width:4px;height:378px;background:#bdbdbd"></div>
<!-- grid -->
<div class="a" style="left:252px;top:127px;width:517px;height:357px;background:#fff"></div>
<div class="hd" style="left:252px;width:100px;padding-left:4px;border-right:1px solid #c4c4c4">Typ</div>
<div class="hd" style="left:352px;width:100px;padding-left:4px;border-right:1px solid #c4c4c4">ID</div>
<div class="hd" style="left:452px;width:160px;padding-left:4px;border-right:1px solid #c4c4c4">Name</div>
<div class="hd" style="left:612px;width:157px;padding-left:4px">Beschreibung</div>
<div class="row" style="top:127.5px;background:#ffffff;color:#484848;font-weight:normal"><svg class="pi" width="8" height="12" viewBox="0 0 8 12"><rect x="0" y="0" width="7" height="1.1" fill="#2e2e2e"/><rect x="0.2" y="2" width="6.6" height="9.1" fill="#2e2e2e"/><path d="M1.55 2.9 C1.55 6 5.45 6 5.45 2.9" fill="none" stroke="#ffffff" stroke-width="1.3"/></svg><span class="c1">Produkt</span><span class="c2">BCL014_1401</span><span class="c3">Hermitage Sunny Half-Zip Swea…</span><span class="c4">Half-zip sweater with sunny col…</span></div>
<div class="row" style="top:146.9px;background:#f5f5f5;color:#484848;font-weight:normal"><svg class="pi" width="8" height="12" viewBox="0 0 8 12"><rect x="0" y="0" width="7" height="1.1" fill="#2e2e2e"/><rect x="0.2" y="2" width="6.6" height="9.1" fill="#2e2e2e"/><path d="M1.55 2.9 C1.55 6 5.45 6 5.45 2.9" fill="none" stroke="#ffffff" stroke-width="1.3"/></svg><span class="c1">Produkt</span><span class="c2">BCL014_1402</span><span class="c3">Gusso Green Khaki Shirt</span><span class="c4">Green khaki shirt with front poc…</span></div>
<div class="row" style="top:166.2px;background:#ffffff;color:#484848;font-weight:normal"><svg class="pi" width="8" height="12" viewBox="0 0 8 12"><rect x="0" y="0" width="7" height="1.1" fill="#2e2e2e"/><rect x="0.2" y="2" width="6.6" height="9.1" fill="#2e2e2e"/><path d="M1.55 2.9 C1.55 6 5.45 6 5.45 2.9" fill="none" stroke="#ffffff" stroke-width="1.3"/></svg><span class="c1">Produkt</span><span class="c2">BCL014_1403</span><span class="c3">Borsati Dual-Toned T-Shirt</span><span class="c4">Dual-toned t-shirt with purple s…</span></div>
<div class="row" style="top:185.6px;background:#f5f5f5;color:#484848;font-weight:normal"><svg class="pi" width="8" height="12" viewBox="0 0 8 12"><rect x="0" y="0" width="7" height="1.1" fill="#2e2e2e"/><rect x="0.2" y="2" width="6.6" height="9.1" fill="#2e2e2e"/><path d="M1.55 2.9 C1.55 6 5.45 6 5.45 2.9" fill="none" stroke="#ffffff" stroke-width="1.3"/></svg><span class="c1">Produkt</span><span class="c2">BCL014_1404</span><span class="c3">Luigi Valenti Green Striped T-Shirt</span><span class="c4">Green striped t-shirt with long s…</span></div>
<div class="row" style="top:205.0px;background:#ffffff;color:#484848;font-weight:normal"><svg class="pi" width="8" height="12" viewBox="0 0 8 12"><rect x="0" y="0" width="7" height="1.1" fill="#2e2e2e"/><rect x="0.2" y="2" width="6.6" height="9.1" fill="#2e2e2e"/><path d="M1.55 2.9 C1.55 6 5.45 6 5.45 2.9" fill="none" stroke="#ffffff" stroke-width="1.3"/></svg><span class="c1">Produkt</span><span class="c2">BCL014_1405</span><span class="c3">Albini Blue T-Shirt</span><span class="c4">Classic blue t-shirt</span></div>
<div class="row" style="top:224.4px;background:#f5f5f5;color:#484848;font-weight:normal"><svg class="pi" width="8" height="12" viewBox="0 0 8 12"><rect x="0" y="0" width="7" height="1.1" fill="#2e2e2e"/><rect x="0.2" y="2" width="6.6" height="9.1" fill="#2e2e2e"/><path d="M1.55 2.9 C1.55 6 5.45 6 5.45 2.9" fill="none" stroke="#ffffff" stroke-width="1.3"/></svg><span class="c1">Produkt</span><span class="c2">BCL014_1406</span><span class="c3">Versatil Bright Blue Striped T-Sh…</span><span class="c4">Bright blue striped t-shirt</span></div>
<div class="row" style="top:243.7px;background:#ffffff;color:#484848;font-weight:normal"><svg class="pi" width="8" height="12" viewBox="0 0 8 12"><rect x="0" y="0" width="7" height="1.1" fill="#2e2e2e"/><rect x="0.2" y="2" width="6.6" height="9.1" fill="#2e2e2e"/><path d="M1.55 2.9 C1.55 6 5.45 6 5.45 2.9" fill="none" stroke="#ffffff" stroke-width="1.3"/></svg><span class="c1">Produkt</span><span class="c2">BCL014_1407</span><span class="c3">Hermitage Brown Striped Pullov…</span><span class="c4">Brown striped pullover</span></div>
<div class="row sel" style="top:263.1px;background:#0567ab;color:#ffffff;font-weight:bold"><svg class="pi" width="8" height="12" viewBox="0 0 8 12"><rect x="0" y="0" width="7" height="1.1" fill="#ffffff"/><rect x="0.2" y="2" width="6.6" height="9.1" fill="#ffffff"/><path d="M1.55 2.9 C1.55 6 5.45 6 5.45 2.9" fill="none" stroke="#0567ab" stroke-width="1.3"/></svg><span class="c1">Produkt</span><span class="c2">BCL014_1408</span><span class="c3">Gusso Woollen Baby Vest</span><span class="c4">Woollen baby vest in navy blue</span></div>
<div class="row" style="top:282.5px;background:#ffffff;color:#484848;font-weight:normal"><svg class="pi" width="8" height="12" viewBox="0 0 8 12"><rect x="0" y="0" width="7" height="1.1" fill="#2e2e2e"/><rect x="0.2" y="2" width="6.6" height="9.1" fill="#2e2e2e"/><path d="M1.55 2.9 C1.55 6 5.45 6 5.45 2.9" fill="none" stroke="#ffffff" stroke-width="1.3"/></svg><span class="c1">Produkt</span><span class="c2">BCL014_1409</span><span class="c3">Borsati Blue Layered T-Shirt</span><span class="c4">Blue layered t-shirt with full sle…</span></div>
<div class="row" style="top:301.8px;background:#f5f5f5;color:#484848;font-weight:normal"><svg class="pi" width="8" height="12" viewBox="0 0 8 12"><rect x="0" y="0" width="7" height="1.1" fill="#2e2e2e"/><rect x="0.2" y="2" width="6.6" height="9.1" fill="#2e2e2e"/><path d="M1.55 2.9 C1.55 6 5.45 6 5.45 2.9" fill="none" stroke="#ffffff" stroke-width="1.3"/></svg><span class="c1">Produkt</span><span class="c2">BCL014_1410</span><span class="c3">Luigi Valenti Brown Striped T-Sh…</span><span class="c4">Brown striped t-shirt</span></div>
<div class="row" style="top:321.2px;background:#ffffff;color:#484848;font-weight:normal"><svg class="pi" width="8" height="12" viewBox="0 0 8 12"><rect x="0" y="0" width="7" height="1.1" fill="#2e2e2e"/><rect x="0.2" y="2" width="6.6" height="9.1" fill="#2e2e2e"/><path d="M1.55 2.9 C1.55 6 5.45 6 5.45 2.9" fill="none" stroke="#ffffff" stroke-width="1.3"/></svg><span class="c1">Produkt</span><span class="c2">BCL014_1411</span><span class="c3">Albini Blue Plaid Shirt</span><span class="c4">Blue plaid shirt with long sleeves</span></div>
<div class="row" style="top:340.6px;background:#f5f5f5;color:#484848;font-weight:normal"><svg class="pi" width="8" height="12" viewBox="0 0 8 12"><rect x="0" y="0" width="7" height="1.1" fill="#2e2e2e"/><rect x="0.2" y="2" width="6.6" height="9.1" fill="#2e2e2e"/><path d="M1.55 2.9 C1.55 6 5.45 6 5.45 2.9" fill="none" stroke="#ffffff" stroke-width="1.3"/></svg><span class="c1">Produkt</span><span class="c2">BCL014_1412</span><span class="c3">Versatil Orange Half-Zip Sweater</span><span class="c4">Orange half-zip sweater</span></div>
<div class="row" style="top:359.9px;background:#ffffff;color:#484848;font-weight:normal"><svg class="pi" width="8" height="12" viewBox="0 0 8 12"><rect x="0" y="0" width="7" height="1.1" fill="#2e2e2e"/><rect x="0.2" y="2" width="6.6" height="9.1" fill="#2e2e2e"/><path d="M1.55 2.9 C1.55 6 5.45 6 5.45 2.9" fill="none" stroke="#ffffff" stroke-width="1.3"/></svg><span class="c1">Produkt</span><span class="c2">BCL014_1413</span><span class="c3">Hermitage White Striped Cotton…</span><span class="c4">White striped cotton shirt</span></div>
<div class="row" style="top:379.3px;background:#f5f5f5;color:#484848;font-weight:normal"><svg class="pi" width="8" height="12" viewBox="0 0 8 12"><rect x="0" y="0" width="7" height="1.1" fill="#2e2e2e"/><rect x="0.2" y="2" width="6.6" height="9.1" fill="#2e2e2e"/><path d="M1.55 2.9 C1.55 6 5.45 6 5.45 2.9" fill="none" stroke="#ffffff" stroke-width="1.3"/></svg><span class="c1">Produkt</span><span class="c2">BCL014_1414</span><span class="c3">Gusso Orange and Black Stripe…</span><span class="c4">Orange and black striped t-shir…</span></div>
<div class="row" style="top:398.7px;background:#ffffff;color:#484848;font-weight:normal"><svg class="pi" width="8" height="12" viewBox="0 0 8 12"><rect x="0" y="0" width="7" height="1.1" fill="#2e2e2e"/><rect x="0.2" y="2" width="6.6" height="9.1" fill="#2e2e2e"/><path d="M1.55 2.9 C1.55 6 5.45 6 5.45 2.9" fill="none" stroke="#ffffff" stroke-width="1.3"/></svg><span class="c1">Produkt</span><span class="c2">BCL014_1415</span><span class="c3">Borsati Classic Checkered Shirt</span><span class="c4">Classic checkered fitting shirt</span></div>
<div class="row" style="top:418.1px;background:#f5f5f5;color:#484848;font-weight:normal"><svg class="pi" width="8" height="12" viewBox="0 0 8 12"><rect x="0" y="0" width="7" height="1.1" fill="#2e2e2e"/><rect x="0.2" y="2" width="6.6" height="9.1" fill="#2e2e2e"/><path d="M1.55 2.9 C1.55 6 5.45 6 5.45 2.9" fill="none" stroke="#ffffff" stroke-width="1.3"/></svg><span class="c1">Produkt</span><span class="c2">BCL014_1416</span><span class="c3">Luigi Valenti Striped and Layere…</span><span class="c4">Striped and layered t-shirt with …</span></div>
<div class="a" style="left:252px;top:483px;width:518px;height:1px;background:#b9b9b9"></div>
<div class="a" style="left:252px;top:106px;width:517px;height:1px;background:#c8c8c8"></div>
<div class="a" style="left:769px;top:106px;width:1px;height:378px;background:#bdbdbd"></div>

<div class="a" style="left:154px;top:78px;width:31px;height:30px;border:2.8px solid #e5403c"></div>
<div class="a" style="left:319px;top:270px;width:123px;height:127px;background:#fff;border-radius:2px;box-shadow:1.5px 2px 4px rgba(0,0,0,0.4)"></div>
<div class="mi" style="top:271.5px">Im Tab öffnen</div>
<div class="a" style="left:321px;top:292px;width:118.5px;height:1px;background:#d8d8d8"></div>
<div class="mi" style="top:295.3px">Suche Produktvarianten</div>
<div class="mi" style="top:314.3px">Suche Produktbilder</div>
<div class="a" style="left:321px;top:333.5px;width:118.5px;height:1px;background:#d8d8d8"></div>
<div class="mi" style="top:338.2px">Produkt augmentieren</div>
<div class="a" style="left:320px;top:335px;width:122.5px;height:21.8px;border:3px solid #e5403c;border-top-width:2.8px;border-bottom-width:2.4px"></div>
<div class="mi" style="top:356.6px">Produktteaser anlegen</div>
<div class="a" style="left:321px;top:374.5px;width:118.5px;height:1px;background:#d8d8d8"></div>
<div class="a" style="left:320.5px;top:379px;width:119.5px;height:16.7px;background:#d6ecfb;border-radius:2px"></div>
<div class="mi" style="top:379.5px">Zelleninhalt kopieren</div>

</body></html>
